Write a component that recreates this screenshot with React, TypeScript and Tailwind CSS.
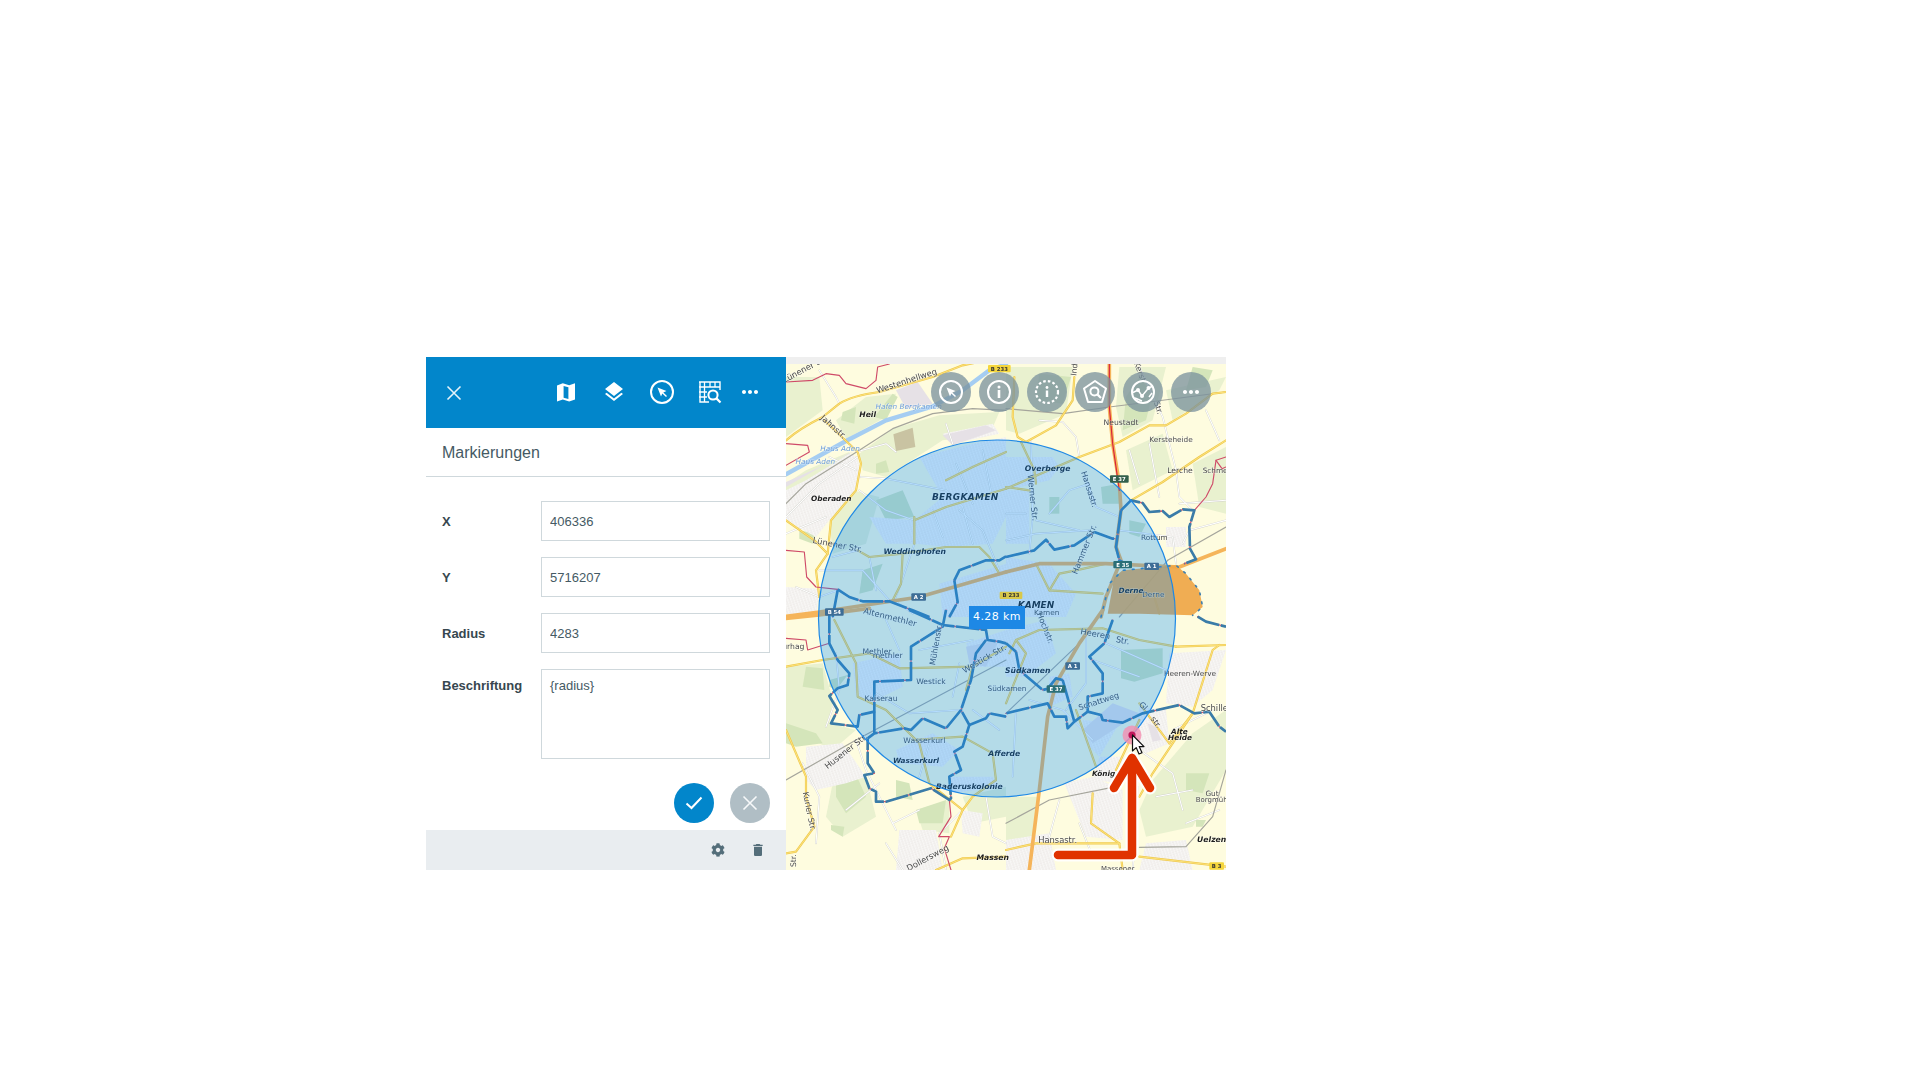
import React from "react";
import { MdLayers, MdMoreHoriz, MdDelete } from "react-icons/md";
import { FaCog } from "react-icons/fa";

const T: Record<string, string> = {
  a: "scale(.33333)",
  b: "translate(220,0) scale(.33333)",
  c: "translate(0,253) scale(.33333)",
  d: "translate(220,253) scale(.33333)",
};
type Layer = Partial<Record<"a" | "b" | "c" | "d", string[]>>;

function L({ data, ...p }: { data: Layer } & React.SVGProps<SVGPathElement>) {
  return (
    <>
      {Object.entries(data).map(([k, ds]) => (
        <g key={k} transform={T[k]}>
          {(ds as string[]).map((d, i) => (
            <path key={i} d={d} strokeLinejoin="round" strokeLinecap="round" {...p} />
          ))}
        </g>
      ))}
    </>
  );
}

const lightGreen: Layer = {
  a: ["M220,290L320,215L460,175L640,165L610,235L470,250L300,360L230,340Z", "M150,190L240,120L330,110L300,180L180,245Z", "M0,380L60,340L190,285L200,340L120,400L60,440L0,470Z", "M130,480L200,400L280,420L240,560L140,590Z", "M0,60L100,60L110,160L0,240Z"],
  b: ["M0,30L200,30L180,170L40,230L0,220Z", "M340,30L480,30L440,190L350,240L330,150Z", "M480,100L660,60L640,100L500,190Z", "M560,320L660,270L660,470L580,450Z", "M360,280L470,230L500,340L380,400Z"],
  c: ["M0,170L110,160L140,270L130,340L210,360L140,420L0,350Z", "M140,520L240,500L270,620L170,680L120,620Z", "M390,600L490,570L490,670L410,660Z", "M530,560L660,530L660,620L560,640Z"],
  d: ["M440,510L560,370L660,300L660,480L560,650L420,680L400,600Z", "M0,560L100,560L80,680L0,700Z"],
};
const midGreen: Layer = {
  a: ["M170,165L210,150L205,200L165,190Z", "M270,320L300,310L310,345L270,350Z", "M265,180L320,110L335,120L300,190Z", "M40,520L90,530L80,560L40,545Z", "M270,430L350,400L385,480L300,490Z", "M230,640L290,620L260,700L220,710Z", "M60,440L110,430L105,460L65,465Z"],
  b: ["M100,50L195,60L170,140L90,130Z", "M360,120L400,60L440,110L420,190L350,220Z", "M560,30L620,40L600,90L540,100Z", "M285,390L340,380L340,440L290,440Z", "M130,420L160,420L160,470L130,470Z", "M370,490L420,500L400,540L370,530Z"],
  c: ["M60,170L110,175L115,240L50,230Z", "M0,340L90,370L110,400L30,410L0,400Z", "M150,520L215,505L240,560L180,610L150,560Z", "M330,510L370,520L380,570L330,560Z", "M390,600L480,570L470,640L400,640Z", "M130,210L185,195L150,240L130,230Z", "M135,645L175,650L170,680L135,660Z"],
  d: ["M345,120L470,115L470,190L385,215L345,205Z", "M540,490L610,490L590,550L540,540Z", "M570,630L600,630L590,650L570,650Z"],
};
const urban: Layer = {
  a: ["M0,400L60,370L190,290L215,300L225,360L205,400L130,490L90,540L0,490Z", "M400,300L560,260L660,240L660,480L620,560L480,570L390,560L385,490L470,420Z", "M0,690L100,695L90,780L0,770Z", "M470,230L620,200L640,230L500,260Z", "M460,680L660,620L660,780L470,780Z", "M250,480L390,490L390,560L300,560Z"],
  b: ["M0,300L140,300L160,330L130,370L0,400Z", "M0,600L130,620L210,710L180,780L0,780Z", "M0,400L70,400L70,560L0,560Z", "M480,510L540,510L540,570L480,570Z"],
  c: ["M200,160L340,130L350,230L250,280L210,260Z", "M60,410L170,400L240,500L180,520L90,540L60,510Z", "M340,660L450,660L470,780L330,780Z", "M525,600L590,610L580,680L530,670Z", "M440,370L520,420L470,470L340,460L330,420Z", "M540,100L660,60L660,170L570,170Z", "M490,500L620,500L640,530L500,550Z"],
  d: ["M0,60L120,30L150,130L60,200L0,200Z", "M490,130L660,120L620,240L560,290L480,280Z", "M175,520L260,500L350,540L350,690L240,680Z", "M0,690L130,670L150,780L0,780Z", "M280,440L350,440L380,470L340,520L260,510Z", "M400,290L480,300L490,400L420,430L380,400Z", "M420,700L540,690L560,780L400,780Z", "M230,330L340,340L280,440L240,400Z", "M130,200L190,190L200,260L130,290Z"],
};
const industry: Layer = {
  a: ["M0,375L190,290L210,280L130,315L0,390Z", "M330,100L395,75L440,140L360,155Z", "M470,235L600,205L630,220L500,265Z"],
  d: ["M230,360L320,280L400,310L345,345L260,400Z", "M425,340L450,350L465,390L440,395Z"],
  c: ["M540,110L640,90L600,170L550,160Z"],
};
const whiteRoads: Layer = {
  a: ["M0,480L100,380L215,300", "M210,285L300,260L330,285", "M225,360L300,365L480,400L530,450L560,560", "M385,560L345,680L325,730L380,770", "M140,600L215,580", "M30,690L100,720L155,700", "M520,460L590,520L640,640", "M100,640L230,640L310,730", "M480,200L500,260", "M160,140L150,120L100,40", "M0,530L120,480", "M220,400L300,460L385,490", "M440,460L470,540", "M250,600L270,700", "M130,300L210,340", "M590,280L620,430", "M510,320L560,440"],
  b: ["M75,250L80,480L70,590", "M235,355L270,450L340,480", "M100,190L170,195L210,240L220,300", "M400,30L470,180L510,340L520,420L560,460", "M340,520L500,540L510,620", "M0,550L90,530L250,520", "M520,440L660,430", "M530,560L550,520L660,490", "M0,470L60,470", "M130,470L190,400L250,380", "M90,490L220,520", "M370,280L400,380", "M430,260L460,420", "M600,160L640,250"],
  c: ["M210,390L240,480L330,660", "M50,460L100,560L90,700", "M270,250L370,310L520,300", "M300,700L350,780", "M120,350L160,240L150,130", "M500,260L520,160", "M530,600L460,670L480,780", "M600,560L620,680L660,700", "M400,120L560,90", "M300,30L340,120", "M560,300L640,360", "M400,500L430,400", "M180,600L280,520", "M320,640L400,600"],
  d: ["M70,270L170,300L260,390", "M400,420L500,490L530,600", "M220,640L260,740", "M395,530L390,650L380,780", "M240,70L240,220L180,300", "M500,360L620,300", "M160,570L130,680", "M300,100L480,180", "M260,150L400,200", "M30,300L20,500", "M450,560L560,540", "M540,640L640,600"],
};
const gray: Layer = {
  a: ["M0,440L60,380L220,280L320,215L440,170L560,155L660,160"],
  b: ["M0,155L170,170L310,150L430,135L660,105", "M485,610L660,510", "M340,780L485,610"],
  c: ["M0,510L210,390L660,150"],
  d: ["M0,310L220,100", "M0,640L130,570L330,530", "M400,712L540,710L620,620L660,480"],
};
const canal: Layer = { a: ["M0,352L180,252L300,190L440,148L530,100L610,40L660,22"] };
const yellow: Layer = {
  a: ["M0,250Q40,215 110,180L160,140Q200,115 280,105L440,60L530,25L600,10", "M115,190L215,285L225,320L210,400L135,490L125,590L90,640L100,720", "M0,490L85,550L125,590", "M215,580L250,600L350,590L480,570L580,570L610,600L640,650", "M350,590L345,680L320,730", "M385,480L385,560", "M385,490L480,450L660,395", "M480,370L560,330L660,285"],
  b: ["M205,60L200,130L150,205L60,255L35,240L20,180L25,60", "M0,395L220,300L340,255L430,205L480,205L540,170L620,110L660,105", "M375,430L470,375L580,300L660,250", "M45,255L85,340L90,380", "M0,390L70,400", "M90,620L130,700L290,710", "M130,700L160,650L210,640L300,620", "M370,700L445,720L460,770"],
  c: ["M0,170L110,150L250,130L340,175L560,170L660,110", "M0,360L60,500L60,560L85,650L30,725L0,730", "M145,30L210,160L215,260L300,300L400,400L430,520L530,600L495,680", "M380,390L530,380L620,430L630,510L560,560L530,600", "M450,780L530,745L660,740", "M560,170L540,240"],
  d: ["M510,110L660,105", "M10,130L30,90L100,60L290,55L400,90L510,110", "M490,400L560,310L620,120L640,105", "M560,310L440,490L400,560", "M400,280L490,400", "M260,550L255,640L340,700L350,780", "M0,720L90,700L340,700", "M400,740L660,770", "M400,330L330,480", "M210,300L270,470", "M0,280L60,130L30,90"],
};
const highway: Layer = {
  a: ["M0,778L100,765L400,720L660,645"],
  b: ["M0,645L100,620L300,620L520,630L660,575", "M310,20L310,150L320,260L340,380L345,460L330,570L345,610L300,720L285,780"],
  c: ["M0,25L100,15L250,-5"],
  d: ["M290,0L220,100L150,220L125,320L100,540L70,780"],
};
const bridgeRed: Layer = { b: ["M310,20L310,150L320,260L340,400"] };
const redBorder: Layer = {
  a: ["M0,260L65,265L70,285L0,325", "M0,75L80,70L120,50L160,55L180,80L240,95L270,70L275,30L310,21", "M0,580L55,585L62,660L90,690L155,697"],
  b: ["M565,460L600,420L620,380L630,310L660,300", "M630,310L648,335L660,330"],
  c: ["M490,570L495,620L458,680L490,680L475,715L495,780", "M0,85L60,90L65,120L130,100"],
};
const boundary: Layer = {
  a: ["M155,697L190,720L230,733L310,733L380,760L430,780", "M155,700L140,780", "M505,670L520,640L600,610L640,610L660,598", "M505,670L515,735L490,780"],
  b: ["M345,460L375,430L410,438L430,465L470,462L490,480L530,457L565,460L550,510L552,575L570,607L535,620", "M345,460L330,570L340,610L360,620", "M0,600L85,580L120,548L145,578L205,565L265,525L320,545L327,545"],
  c: ["M130,0L130,100L155,150L190,190L185,225L155,235L130,258L155,300L135,340L215,350L220,315L265,305L265,215L375,210L375,110L470,50L480,0", "M370,0L470,45L600,60L605,90L640,95L660,100", "M600,90L570,130L555,210L525,300L480,355L410,325L375,360L355,355L265,370L245,385L245,460L265,490L235,495L250,535L270,545L270,575L300,575L435,535L490,570L495,565L490,500L525,480L505,425L530,410L550,345L525,300", "M550,345L600,325L610,310L660,320", "M265,305L265,370"],
  d: ["M320,30L295,100L250,140L290,190L290,250L245,260L245,305L205,335L185,355L180,320L145,320L125,280L0,310", "M170,210L205,335", "M130,230L150,205L170,210", "M30,125L40,180L110,240L130,235", "M0,100L30,125", "M245,305L285,315L290,330L350,338L410,310L520,285L565,310L610,305L640,350L660,365", "M575,20L600,35L660,50"],
};
const derne: Layer = { b: ["M305,770L325,660L350,640L510,625L540,650L580,700L590,750L560,775L400,770Z"] };
const derneEdge: Layer = { b: ["M285,780L310,680L350,640L510,625L540,650L580,700L590,750L560,775"] };

const labels: [string, string, number, number, number, number, "n" | "b" | "w", number?][] = [
  ["a", "Lünener Su", 55, 45, 25, -28, "n"],
  ["a", "Westenhellweg", 362, 80, 25, -18, "n"],
  ["a", "Heil", 245, 180, 23, 0, "b"],
  ["a", "Hafen Bergkamen", 368, 157, 22, 0, "w"],
  ["a", "Jahnstr.", 142, 218, 25, 42, "n"],
  ["a", "Haus Aden", 162, 282, 22, 0, "w"],
  ["a", "Haus Aden", 88, 320, 22, 0, "w"],
  ["a", "Oberaden", 136, 432, 22, 0, "b"],
  ["a", "BERGKAMEN", 538, 430, 27, 0, "b", 1],
  ["a", "Weddinghofen", 386, 592, 23, 0, "b"],
  ["a", "Lünener Str.", 155, 572, 25, 11, "n"],
  ["b", "Overberge", 125, 343, 23, 0, "b"],
  ["b", "Werner Str.", 80, 430, 25, 84, "n"],
  ["b", "Hansastr.", 250, 405, 24, 72, "n"],
  ["b", "Neustadt", 345, 205, 23, 0, "n"],
  ["b", "Kersteheide", 495, 255, 22, 0, "n"],
  ["b", "Lerche", 522, 348, 23, 0, "n"],
  ["b", "Schmer", 632, 347, 22, 0, "n"],
  ["b", "Rottum", 445, 550, 22, 0, "n"],
  ["b", "Hammer Str.", 235, 585, 25, -68, "n"],
  ["b", "Derne", 375, 707, 22, 0, "b"],
  ["b", "Derne", 442, 720, 22, 0, "n"],
  ["b", "KAMEN", 90, 754, 27, 0, "b"],
  ["b", "Kamen", 122, 775, 22, 0, "n"],
  ["b", "Kerst", 402, 52, 24, 70, "n"],
  ["b", "Str.", 457, 160, 24, 72, "n"],
  ["b", "Ind.", 205, 42, 24, -84, "n"],
  ["c", "Altenmethler", 312, 30, 25, 14, "n"],
  ["c", "Methler", 273, 132, 23, 0, "n"],
  ["c", "methler", 305, 143, 23, 0, "n"],
  ["c", "Mühlenstr.", 450, 112, 24, -80, "n"],
  ["c", "Westick", 435, 222, 23, 0, "n"],
  ["c", "Kaiserau", 285, 272, 23, 0, "n"],
  ["c", "Wasserkurl", 415, 399, 23, 0, "n"],
  ["c", "Wasserkurl", 390, 458, 22, 0, "b"],
  ["c", "Afferde", 655, 437, 23, 0, "b"],
  ["c", "Baderuskolonie", 550, 537, 23, 0, "b"],
  ["c", "Husener Str.", 180, 432, 25, -38, "n"],
  ["c", "Kurler Str.", 70, 612, 24, 78, "n"],
  ["c", "Dollersweg", 425, 752, 25, -28, "n"],
  ["c", "Massen", 620, 749, 23, 0, "b"],
  ["c", "Westick Str.", 595, 155, 25, -30, "n"],
  ["c", "urhag", 22, 118, 23, 0, "n"],
  ["c", "Str.", 22, 760, 23, -90, "n"],
  ["d", "Hochstr.", 118, 62, 24, 68, "n"],
  ["d", "Heeren", 268, 80, 25, 10, "n"],
  ["d", "Str.", 350, 100, 25, 10, "n"],
  ["d", "Südkamen", 65, 188, 23, 0, "b"],
  ["d", "Südkamen", 3, 244, 22, 0, "n"],
  ["d", "Schattweg", 278, 282, 24, -18, "n"],
  ["d", "Gl", 412, 296, 24, 45, "n"],
  ["d", "str.", 450, 345, 24, 55, "n"],
  ["d", "Alte", 520, 371, 22, 0, "b"],
  ["d", "Heide", 522, 389, 22, 0, "b"],
  ["d", "König", 293, 497, 22, 0, "b"],
  ["d", "Heeren-Werve", 552, 198, 22, 0, "n"],
  ["d", "Schiller", 630, 302, 25, 0, "n"],
  ["d", "Gut", 618, 559, 22, 0, "n"],
  ["d", "Borgmüh", 617, 577, 21, 0, "n"],
  ["d", "Uelzen", 617, 695, 23, 0, "b"],
  ["d", "Hansastr.", 155, 700, 25, 0, "n"],
  ["d", "Massener", 335, 782, 21, 0, "n"],
];
const shields: [string, string, number, number, string, string][] = [
  ["a", "B 233", 640, 35, "#f5d63d", "#333"],
  ["a", "A 2", 398, 720, "#3d6d96", "#fff"],
  ["a", "B 54", 145, 765, "#3d6d96", "#fff"],
  ["b", "E 37", 340, 366, "#33604c", "#fff"],
  ["b", "E 35", 350, 623, "#2a6f78", "#fff"],
  ["b", "A 1", 437, 628, "#3d6d96", "#fff"],
  ["b", "B 233", 15, 715, "#d8c84a", "#333"],
  ["d", "A 1", 200, 168, "#3d6d96", "#fff"],
  ["d", "E 37", 150, 237, "#2a6f78", "#fff"],
  ["d", "B 3", 632, 768, "#f5d63d", "#333"],
];

function MapArt() {
  return (
    <svg width={440} height={513} viewBox="0 0 440 513" className="block blur-[0.4px]" style={{ fontFamily: '"DejaVu Sans", sans-serif' }}>
      <defs>
        <pattern id="streets" width="9" height="7" patternUnits="userSpaceOnUse" patternTransform="rotate(-18)">
          <rect width="9" height="7" fill="#f1efec" />
          <path d="M0 .5H9M0 4H5M4.5 0V7M8.5 2V7" stroke="#ffffff" strokeWidth="1" fill="none" />
          <rect x="1" y="1.6" width="2" height="1.2" fill="#dfdad6" />
          <rect x="5.6" y="4.6" width="2" height="1.2" fill="#dfdad6" />
        </pattern>
      </defs>
      <rect width="440" height="513" fill="#fefcdf" />
      <L data={lightGreen} fill="#e9f1cf" />
      <L data={midGreen} fill="#d4e5ba" />
      <L data={urban} fill="url(#streets)" />
      <L data={industry} fill="#e6e1e6" />
      <g transform={T.a}><path d="M322,232L380,212L388,270L330,282Z" fill="#c9c3a2" /></g>
      <L data={whiteRoads} fill="none" stroke="#cfcfc9" strokeWidth={5} />
      <L data={whiteRoads} fill="none" stroke="#fff" strokeWidth={3.2} />
      <L data={canal} fill="none" stroke="#a5cdf2" strokeWidth={13} />
      <L data={gray} fill="none" stroke="#a5a59c" strokeWidth={3.5} />
      <L data={yellow} fill="none" stroke="#efc84c" strokeWidth={6.5} />
      <L data={yellow} fill="none" stroke="#fbe27c" strokeWidth={3} />
      <L data={highway} fill="none" stroke="#f5b45a" strokeWidth={11} />
      <L data={bridgeRed} fill="none" stroke="#d8243c" strokeWidth={3.5} />
      <L data={derne} fill="#efa646" fillOpacity={0.92} />
      <L data={redBorder} fill="none" stroke="#cf4a68" strokeWidth={3.4} />
      <L data={boundary} fill="none" stroke="#d65a6e" strokeWidth={4} />
      <L data={boundary} fill="none" stroke="#3a7ca8" strokeWidth={8} strokeDasharray="70 5" strokeLinecap="butt" />
      <L data={derneEdge} fill="none" stroke="#3f7fae" strokeWidth={5} strokeDasharray="5 22" />
      <g>
        {labels.map(([q, t, x, y, s, r, st, sp], i) => (
          <g key={i} transform={T[q]}>
            <text
              x={x}
              y={y}
              fontSize={s}
              textAnchor="middle"
              fill={st === "w" ? "#6f9fd8" : st === "b" ? "#1e1e1e" : "#4a4a4a"}
              fontWeight={st === "b" ? 700 : 400}
              fontStyle={st === "b" || st === "w" ? "italic" : "normal"}
              letterSpacing={sp ?? 0}
              stroke="#ffffff"
              strokeOpacity={0.45}
              strokeWidth={3}
              paintOrder="stroke"
              transform={r ? `rotate(${r} ${x} ${y - 8})` : undefined}
            >
              {t}
            </text>
          </g>
        ))}
      </g>
      <circle cx="211" cy="261.5" r="178.5" fill="#0a90ff" fillOpacity={0.3} stroke="#1e88e5" strokeWidth="1.2" />
      {shields.map(([q, t, x, y, bg, fg], i) => {
        const w = t.length * 12 + 8;
        return (
          <g key={i} transform={T[q]}>
            <rect x={x - w / 2} y={y - 11} width={w} height={22} rx={3} fill={bg} />
            <text x={x} y={y + 6} fontSize={16} fontWeight={700} textAnchor="middle" fill={fg}>{t}</text>
          </g>
        );
      })}
      <path d="M272 498H346V401M328 431L346 401L364 431" fill="none" stroke="#fff" strokeOpacity={0.9} strokeWidth="13" strokeLinecap="round" strokeLinejoin="round" />
      <path d="M272 498H346V401M328 431L346 401L364 431" fill="none" stroke="#e03200" strokeWidth="8.5" strokeLinecap="round" strokeLinejoin="round" />
      <circle cx="346" cy="378" r="9.5" fill="#f48fb1" fillOpacity={0.8} />
      <circle cx="346" cy="378" r="3.6" fill="#c2185b" />
      <path d="M346.5 378V394L350.2 390.6L353 397L356 395.7L353.2 389.6H358Z" fill="#fff" stroke="#111" strokeWidth="1.2" strokeLinejoin="round" />
      <rect width="440" height="7" fill="#efefef" />
    </svg>
  );
}

function CursorIcon() {
  return (
    <svg width={26} height={26} viewBox="0 0 26 26" fill="none">
      <circle cx="13" cy="13" r="11" stroke="#fff" strokeWidth="2" />
      <path d="M8.5 8.5L17.5 12L14.3 13.4L18 17L17 18L13.3 14.4L12 17.5Z" fill="#fff" />
    </svg>
  );
}
function TableSearchIcon() {
  return (
    <svg width={24} height={24} viewBox="0 0 24 24" fill="none">
      <path d="M1 2H22V10M2 2V22H11" stroke="#fff" strokeWidth="1.4" />
      <path d="M1 7H22M1 12H9M1 17H9M6.5 2V22M12 2V7M17 2V7" stroke="#fff" strokeWidth="1.3" />
      <circle cx="15" cy="15" r="4.6" stroke="#fff" strokeWidth="2" />
      <path d="M18.4 18.4L22.5 22.5" stroke="#fff" strokeWidth="2.2" />
    </svg>
  );
}
function MapIcon() {
  return (
    <svg width={24} height={24} viewBox="0 0 24 24">
      <path fillRule="evenodd" d="M3 5.5L8.8 3.3L15.2 5.2L21 3.3V19.5L15.2 21.5L8.8 19.5L3 21.5ZM9.6 5.9V17.7L14.4 19V7.2Z" fill="#fff" />
    </svg>
  );
}
function CloseIcon({ size = 16 }: { size?: number }) {
  return (
    <svg width={size} height={size} viewBox="0 0 16 16" fill="none">
      <path d="M1.5 1.5L14.5 14.5M14.5 1.5L1.5 14.5" stroke="#fff" strokeWidth="1.6" strokeOpacity={0.9} />
    </svg>
  );
}
function InfoIcon() {
  return (
    <svg width={26} height={26} viewBox="0 0 26 26" fill="none">
      <circle cx="13" cy="13" r="11" stroke="#fff" strokeWidth="2" />
      <circle cx="13" cy="8" r="1.5" fill="#fff" />
      <path d="M13 11V19" stroke="#fff" strokeWidth="2.6" />
    </svg>
  );
}
function DottedInfoIcon() {
  return (
    <svg width={26} height={26} viewBox="0 0 26 26" fill="none">
      <circle cx="13" cy="13" r="11" stroke="#fff" strokeWidth="2.2" strokeDasharray="2.6 2.16" />
      <circle cx="13" cy="8.5" r="1.4" fill="#fff" />
      <path d="M13 11.5V18" stroke="#fff" strokeWidth="2.4" />
    </svg>
  );
}
function PentagonSearchIcon() {
  return (
    <svg width={26} height={26} viewBox="0 0 26 26" fill="none">
      <path d="M13 2L24 9.5L20 23H6L2 9.5Z" stroke="#fff" strokeWidth="2" strokeLinejoin="round" />
      <circle cx="12.4" cy="12.4" r="4" stroke="#fff" strokeWidth="2" />
      <path d="M15.4 15.4L19 19" stroke="#fff" strokeWidth="2.2" />
    </svg>
  );
}
function RouteCircleIcon() {
  return (
    <svg width={26} height={26} viewBox="0 0 26 26" fill="none">
      <circle cx="13" cy="13" r="11" stroke="#fff" strokeWidth="2" />
      <path d="M3 13.5L8 11L12 17L18.5 9L23 7" stroke="#fff" strokeWidth="1.5" />
      <path d="M5 19L12 22M19 18L22 14" stroke="#fff" strokeWidth="1.4" />
      <circle cx="8" cy="11" r="2" fill="#fff" />
      <circle cx="12" cy="17" r="2" fill="#fff" />
      <circle cx="18.5" cy="9" r="2" fill="#fff" />
    </svg>
  );
}

const labelCls = "w-[99px] shrink-0 pt-[2px] text-[13px] font-bold text-[#37474f]";
const inputCls =
  "h-10 w-[229px] border border-[#cfd8dc] bg-white px-2 text-[13px] text-[#455a64] outline-none";

function MapButton({ children }: { children: React.ReactNode }) {
  return (
    <div className="flex h-10 w-10 items-center justify-center rounded-full bg-[#78909c]/75">{children}</div>
  );
}

export default function App() {
  return (
    <div className="h-[1080px] w-[1920px] bg-white pl-[426px] pt-[357px]" style={{ fontFamily: '"Liberation Sans", Arial, sans-serif' }}>
      <div className="flex h-[513px] w-[800px]">
        <div className="flex w-[360px] shrink-0 flex-col bg-white">
          <div className="flex h-[71px] shrink-0 items-center bg-[#0286cb] pr-5">
            <div className="flex w-[56px] justify-center"><CloseIcon /></div>
            <div className="mb-[2px] ml-auto flex items-center">
              <div className="flex w-12 justify-center"><MapIcon /></div>
              <div className="flex w-12 justify-center"><MdLayers size={24} color="#fff" /></div>
              <div className="flex w-12 justify-center"><CursorIcon /></div>
              <div className="flex w-12 justify-center"><TableSearchIcon /></div>
              <div className="flex w-8 justify-center"><MdMoreHoriz size={24} color="#fff" /></div>
            </div>
          </div>
          <div className="flex h-[49px] shrink-0 items-center border-b border-[#cfd8dc] px-4 pt-[2px] text-base text-[#455a64]">Markierungen</div>
          <div className="flex flex-1 flex-col gap-4 px-4 pt-6">
            <div className="flex items-center">
              <div className={labelCls}>X</div>
              <input readOnly value="406336" className={inputCls} />
            </div>
            <div className="flex items-center">
              <div className={labelCls}>Y</div>
              <input readOnly value="5716207" className={inputCls} />
            </div>
            <div className="flex items-center">
              <div className={labelCls}>Radius</div>
              <input readOnly value="4283" className={inputCls} />
            </div>
            <div className="flex">
              <div className="w-[99px] shrink-0 pt-[7px] text-[13px] font-bold text-[#37474f]">Beschriftung</div>
              <textarea readOnly value="{radius}" className="h-[90px] w-[229px] resize-none border border-[#cfd8dc] bg-white px-2 py-[6px] text-[13px] text-[#455a64] outline-none" />
            </div>
            <div className="mt-2 flex justify-end gap-4">
              <div className="flex h-10 w-10 items-center justify-center rounded-full bg-[#0286cb]">
                <svg width={18} height={14} viewBox="0 0 18 14" fill="none"><path d="M1.5 7.5L6.5 12L16.5 1.5" stroke="#fff" strokeWidth="2" /></svg>
              </div>
              <div className="flex h-10 w-10 items-center justify-center rounded-full bg-[#b0bec5]"><CloseIcon /></div>
            </div>
          </div>
          <div className="flex h-10 shrink-0 items-center justify-end bg-[#e9edf0] pr-[20px] text-[#546e7a]">
            <div className="mr-3 flex w-10 justify-center"><FaCog size={14} /></div>
            <div className="flex w-4 justify-center"><MdDelete size={16} /></div>
          </div>
        </div>
        <div className="relative h-[513px] w-[440px] shrink-0 overflow-hidden">
          <MapArt />
          <div className="absolute right-[15px] top-[15px] flex gap-2">
            <MapButton><CursorIcon /></MapButton>
            <MapButton><InfoIcon /></MapButton>
            <MapButton><DottedInfoIcon /></MapButton>
            <MapButton><PentagonSearchIcon /></MapButton>
            <MapButton><RouteCircleIcon /></MapButton>
            <MapButton><MdMoreHoriz size={24} color="#fff" /></MapButton>
          </div>
          <div className="absolute left-[183px] top-[249px] flex h-[23px] w-[56px] items-center justify-center bg-[#1e88e5] text-[11px] tracking-[0.4px] text-white" style={{ fontFamily: '"DejaVu Sans", sans-serif' }}>4.28 km</div>
        </div>
      </div>
    </div>
  );
}
